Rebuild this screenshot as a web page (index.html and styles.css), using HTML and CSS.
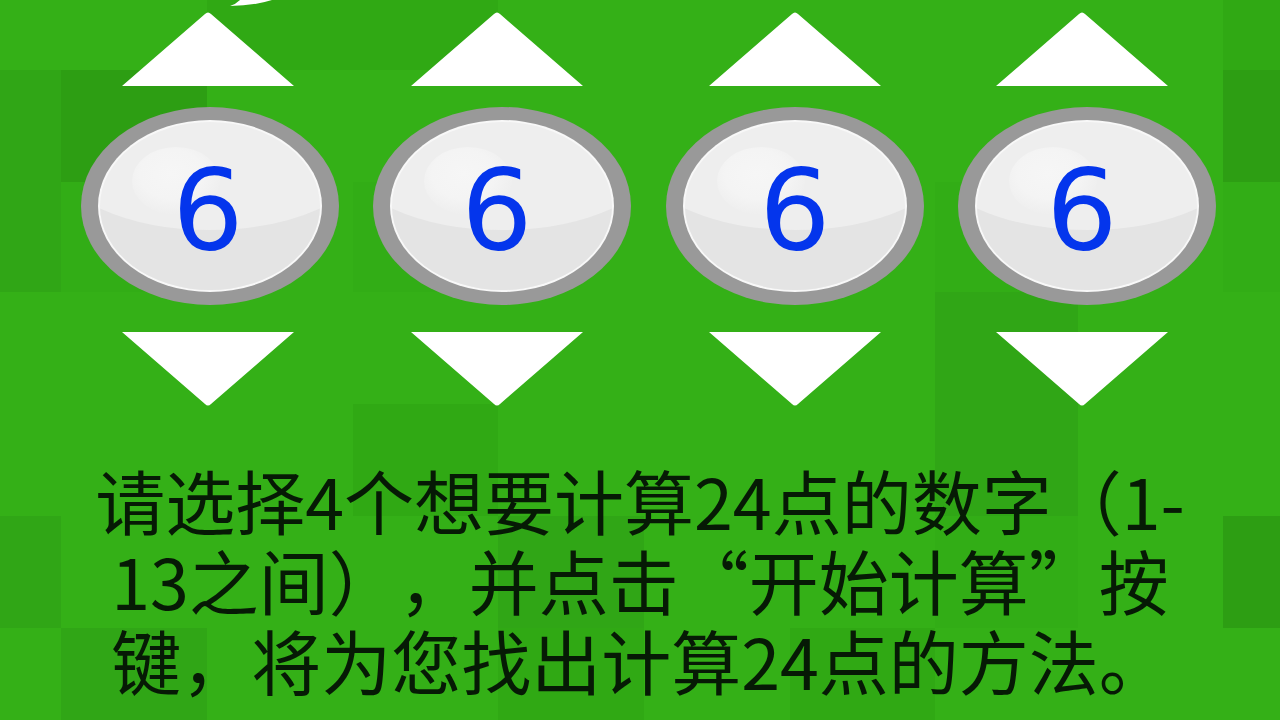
FILE: index.html
```html
<!DOCTYPE html>
<html lang="zh-CN">
<head>
<meta charset="utf-8">
<meta name="viewport" content="width=device-width, initial-scale=1">
<title>24点计算</title>
<link rel="stylesheet" href="styles.css">
</head>
<body>
<svg class="backdrop" viewBox="0 0 1280 720" preserveAspectRatio="none" aria-hidden="true">
  <path fill="#30a914" d="M207 0h291v70H207zM353 404h145v112H353zM498 628h146v92H498zM790 628h145v92H790zM1223 0h57v70h-57z"/>
  <path fill="#32ad16" d="M61 182h146v110H61zM353 182h145v110H353zM935 182h143v110H935zM1223 182h57v110h-57zM935 516h143v112H935z"/>
  <path fill="#30a616" d="M0 70h61v222H0zM0 516h61v112H0zM498 516h146v112H498zM935 292h143v224H935zM61 628h146v92H61z"/>
  <path fill="#2d9e13" d="M61 70h146v112H61zM1223 70h57v112h-57zM1223 516h57v112h-57z"/>
  <path fill="#fff" d="M230 6Q236 4 240 0H272Q253 6 230 6z"/>
</svg>
<svg class="defs" width="0" height="0" aria-hidden="true">
  <defs>
    <radialGradient id="shine" cx="45%" cy="40%" r="60%">
      <stop offset="0" stop-color="#f6f6f6"/>
      <stop offset=".6" stop-color="#f4f4f4"/>
      <stop offset="1" stop-color="#eee"/>
    </radialGradient>
    <clipPath id="face"><ellipse cx="129" cy="99" rx="110" ry="84"/></clipPath>
    <symbol id="dial" viewBox="0 0 258 198">
      <ellipse cx="129" cy="99" rx="129" ry="99" fill="#999"/>
      <ellipse cx="129" cy="99" rx="112" ry="86" fill="#f8f8f8"/>
      <g clip-path="url(#face)">
        <path fill="#eee" d="M0 0h258v198H0z"/>
        <ellipse cx="95" cy="74" rx="44" ry="34" fill="url(#shine)"/>
        <path fill="#e4e4e4" d="M16 100Q65 123 129 123T242 100V198H16z"/>
      </g>
    </symbol>
    <symbol id="up" viewBox="0 0 172 74">
      <path fill="#fff" d="M0 74L83 2Q86 -1 89 2L172 74z"/>
    </symbol>
    <symbol id="down" viewBox="0 0 172 74">
      <path fill="#fff" d="M0 0L83 72Q86 75 89 72L172 0z"/>
    </symbol>
  </defs>
</svg>
<main class="page">
  <section class="picker" aria-label="选择数字">
    <div class="dials" aria-hidden="true">
      <svg class="dial"><use href="#dial"/></svg>
      <svg class="dial"><use href="#dial"/></svg>
      <svg class="dial"><use href="#dial"/></svg>
      <svg class="dial"><use href="#dial"/></svg>
    </div>
    <div class="steppers">
      <button class="arrow" type="button" aria-label="第一个数字加一"><svg class="icon"><use href="#up"/></svg></button>
      <button class="arrow" type="button" aria-label="第二个数字加一"><svg class="icon"><use href="#up"/></svg></button>
      <button class="arrow" type="button" aria-label="第三个数字加一"><svg class="icon"><use href="#up"/></svg></button>
      <button class="arrow" type="button" aria-label="第四个数字加一"><svg class="icon"><use href="#up"/></svg></button>
      <output class="value">6</output>
      <output class="value">6</output>
      <output class="value">6</output>
      <output class="value">6</output>
      <button class="arrow" type="button" aria-label="第一个数字减一"><svg class="icon"><use href="#down"/></svg></button>
      <button class="arrow" type="button" aria-label="第二个数字减一"><svg class="icon"><use href="#down"/></svg></button>
      <button class="arrow" type="button" aria-label="第三个数字减一"><svg class="icon"><use href="#down"/></svg></button>
      <button class="arrow" type="button" aria-label="第四个数字减一"><svg class="icon"><use href="#down"/></svg></button>
    </div>
  </section>
  <p class="hint">请选择4个想要计算24点的数字（1-<br>13之间），并点击“开始计算”按<br>键，将为您找出计算24点的方法。</p>
</main>
</body>
</html>
```
FILE: styles.css
```css
* {
  box-sizing: border-box;
}

body {
  margin: 0;
  min-height: 100vh;
  background: #34b017;
  overflow-x: hidden;
}

.backdrop {
  position: absolute;
  inset: 0;
  width: 100%;
  height: 100%;
  z-index: -1;
}

.defs {
  position: absolute;
}

.page {
  padding-top: 12px;
}

.picker {
  position: relative;
}

/* The glossy discs lie behind the values. */
.dials {
  position: absolute;
  inset: 95px 0 auto;
  display: flex;
  justify-content: space-between;
  padding: 0 64px 0 81px;
}

.dial {
  width: 258px;
  height: 198px;
}

.steppers {
  position: relative;
  display: grid;
  grid-template-columns: 289fr 298fr 287fr 172fr;
  grid-template-rows: 74px 198px 74px;
  row-gap: 24px;
  padding: 0 112px 0 122px;
}

.arrow {
  width: 172px;
  height: 74px;
  padding: 0;
  border: 0;
  background: none;
  cursor: pointer;
}

.icon {
  display: block;
  width: 100%;
  height: 100%;
}

.value {
  width: 172px;
  color: #0435ec;
  font-family: "DejaVu Sans", sans-serif;
  font-size: 112px;
  line-height: 200px;
  text-align: center;
}

.hint {
  margin: 54px 0 0;
  color: #061a05;
  font-family: "Noto Sans CJK SC", sans-serif;
  font-size: 70px;
  font-weight: 400;
  line-height: 80px;
  text-align: center;
  text-spacing-trim: space-all;
}
```
